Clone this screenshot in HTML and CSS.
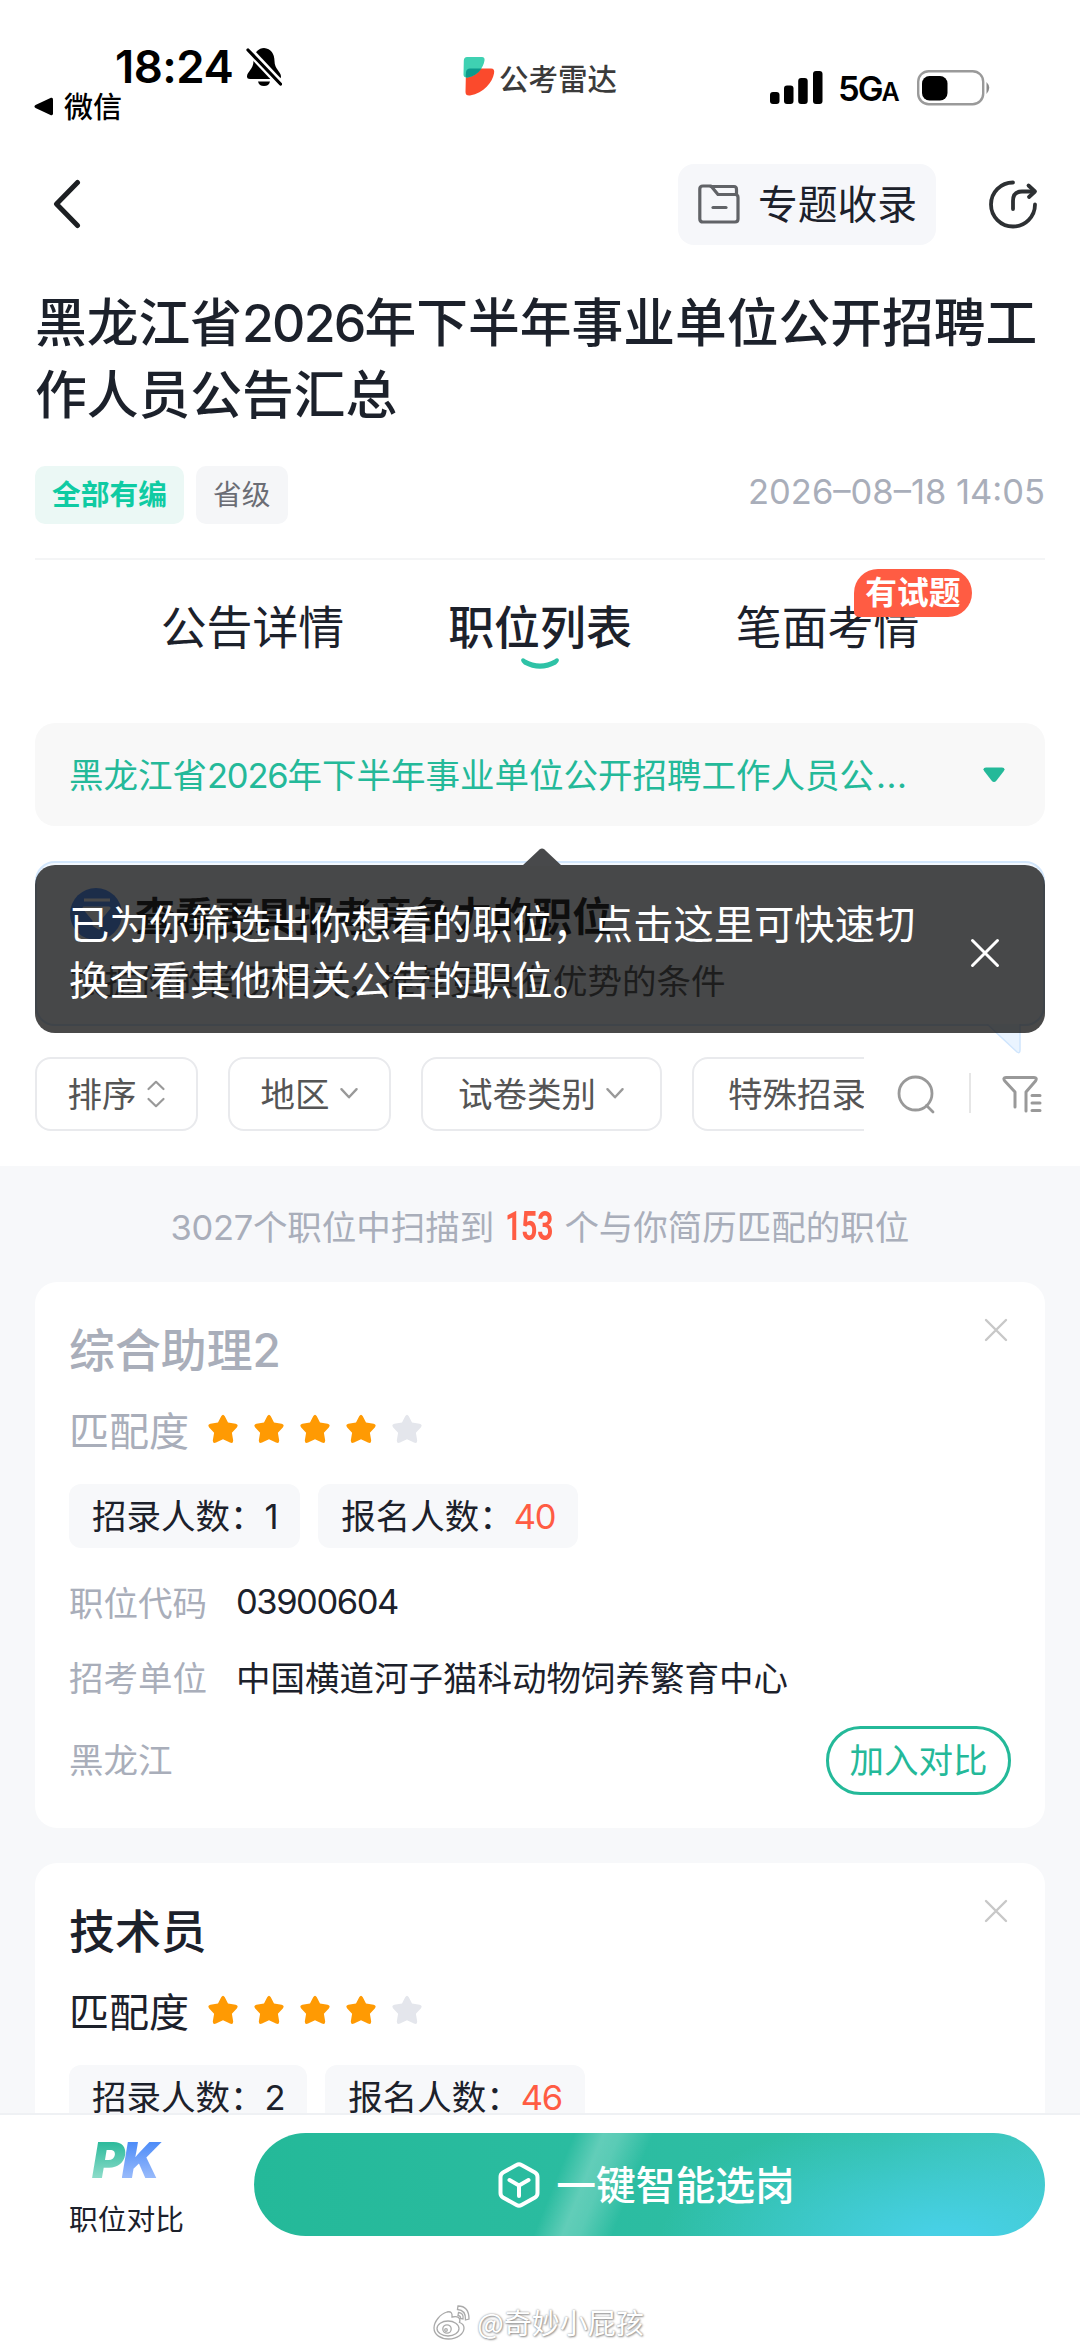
FILE: index.html
```html
<!DOCTYPE html>
<html lang="zh-CN">
<head>
<meta charset="utf-8">
<title>职位列表</title>
<link rel="stylesheet" href="styles.css">
</head>
<body>
<svg width="0" height="0" class="defs" aria-hidden="true">
  <symbol id="star" viewBox="0 0 32 30"><path d="M14.2 2.2Q16-.8 17.8 2.2L21 8.6 28.6 9.8Q32 10.6 29.8 13.4L24.9 18.8 26.2 26.4Q26.2 29.8 23 28.6L16 25.2 9 28.6Q5.8 29.8 5.8 26.4L7.1 18.8 2.2 13.4Q0 10.6 3.4 9.8L11 8.6Z" fill="currentColor"/></symbol>
  <symbol id="close" viewBox="0 0 24 24"><path d="M2 2L22 22M22 2L2 22" fill="none" stroke="currentColor" stroke-width="2.400" stroke-linecap="round"/></symbol>
  <symbol id="down" viewBox="0 0 18 12"><path d="M2 2L9 9.500 16 2" fill="none" stroke="currentColor" stroke-width="2.200" stroke-linecap="round" stroke-linejoin="round"/></symbol>
</svg>
<div class="screen">
  <div class="status">
    <div class="status-left">
      <div class="clock"><span class="time">18:24</span>
        <svg width="36" height="40" viewBox="0 0 36 40"><path d="M18 1C11 1.500 7.500 7 7.500 14 7.500 22 1 25 1 29.500Q1 32 4 32H32Q35 32 35 29.500C35 25 28.500 22 28.500 14 28.500 7 25 1.500 18 1ZM12 34.500H24Q23 39 18 39 13 39 12 34.500Z"/><path d="M1 1.500L35 37.500" stroke="#fff" stroke-width="8"/><path d="M2 3L34.500 37" stroke="#000" stroke-width="3.200" stroke-linecap="round"/></svg>
      </div>
      <div class="back-app"><svg width="20" height="19" viewBox="0 0 20 19"><path d="M1.500 8L17 .8Q19 .3 19 2.500V16.500Q19 18.700 17 18.200L1.500 11Q-.6 9.500 1.500 8Z"/></svg><span>微信</span></div>
    </div>
    <div class="brand">
      <svg width="32" height="39" viewBox="0 0 32 39"><path d="M3 11.500H28Q32 11.500 31 16.500C29.500 25 21 36 7 38.500Q2.500 39 2.500 35Z" fill="#fb4a2c"/><path d="M4 0H19Q22 0 21.500 3.500C20.500 11 14 19 4.500 20.500Q.5 21 .5 17.500L.8 3.500Q1 0 4 0Z" fill="#3fd1b2"/><path d="M3 15Q3.500 11.500 7 11.500H18.500C15 16.500 10.500 19.500 4.500 20.500 3 20.700 2.700 20 2.700 19Z" fill="#0d9a8c"/></svg>
      <span>公考雷达</span>
    </div>
    <div class="status-right">
      <svg width="53" height="34" viewBox="0 0 53 34"><rect x="0" y="21" width="9.500" height="12" rx="3"/><rect x="14" y="14.500" width="9.500" height="18.500" rx="3"/><rect x="28.200" y="7" width="9.500" height="26" rx="3"/><rect x="43" y="0" width="9.500" height="33" rx="3"/></svg>
      <span class="net">5G<small>A</small></span>
      <svg width="74" height="36" viewBox="0 0 74 36"><rect x="1.200" y="1.200" width="65" height="33" rx="10.500" fill="none" stroke="#9a9a9a" stroke-width="2.400"/><path d="M69.500 12Q75 17.500 69.500 24Z" fill="#8a8a8a"/><rect x="5" y="6" width="25.500" height="24.500" rx="7.500"/></svg>
    </div>
  </div>

  <div class="nav">
    <svg class="back" width="28" height="50" viewBox="0 0 28 50"><path d="M24.500 3.500L3.500 25 24.500 46.500" fill="none" stroke="#1c1f22" stroke-width="5" stroke-linecap="round" stroke-linejoin="round"/></svg>
    <div class="collect">
      <svg width="42" height="40" viewBox="0 0 42 40" fill="none" stroke="#616367" stroke-width="3.200" stroke-linejoin="round" stroke-linecap="round"><path d="M1.800 5Q1.800 2 5 2H13L20 10.500H37Q40 10.500 40 13.500V35Q40 38 37 38H5Q1.800 38 1.800 35Z"/><path d="M13 2.500H36Q38.500 2.500 38.500 5.500V10"/><path d="M15 23.500H28"/></svg>
      <span>专题收录</span>
    </div>
    <svg class="share" width="50" height="50" viewBox="0 0 50 50" fill="none" stroke="#2d3033" stroke-width="3.800" stroke-linecap="round" stroke-linejoin="round"><path d="M25 3.500A22 22 0 1 0 47 25.500"/><path d="M25 30V22Q25 12.500 34 12.500H45"/><path d="M40.500 6.500L47 12.500 41 18"/></svg>
  </div>

  <h1>黑龙江省<span class="n">2026</span>年下半年事业单位公开招聘工作人员公告汇总</h1>

  <div class="meta">
    <span class="tag green">全部有编</span><span class="tag">省级</span>
    <span class="date n">2026–08–18 14:05</span>
  </div>

  <div class="tabs">
    <div class="tab">公告详情</div>
    <div class="tab active">职位列表<svg class="smile" width="38" height="12" viewBox="0 0 38 12"><path d="M0 2Q1-1 4.500 1.500Q19 9.500 33.500 1.500Q37-1 38 2Q38 4 35 6.500Q19 15 3 6.500Q0 4 0 2Z" fill="#2ec2a6"/></svg></div>
    <div class="tab">笔面考情<span class="badge">有试题</span></div>
  </div>

  <div class="select">
    <span>黑龙江省<span class="n">2026</span>年下半年事业单位公开招聘工作人员公<span class="dots">...</span></span>
    <svg width="22" height="16" viewBox="0 0 22 16"><path d="M3 .5H19Q23 1 20.500 4.500L13.500 13.500Q11 16.500 8.500 13.500L1.500 4.500Q-1 1 3 .5Z" fill="#24b999"/></svg>
  </div>

  <div class="promo-wrap">
    <div class="promo">
      <div class="promo-title"><svg width="52" height="52" viewBox="0 0 52 52"><circle cx="26" cy="26" r="26" fill="#3f86ff"/><path d="M14 12H40M14 20H39L29 32V40L24 37V32Z" fill="#fff" stroke="#fff" stroke-width="3" stroke-linejoin="round"/></svg><b>查看更具报考竞争力的职位</b></div>
      <p>根据你的简历情况，推荐更具有优势的条件</p>
    </div>
    <svg class="tail" width="36" height="32" viewBox="0 0 36 32"><path d="M1 0L31 28Q34 30 34 26V0" fill="#eaf4ff" stroke="#cfe5fd" stroke-width="1.500"/></svg>
    <div class="tip">
      <svg class="tip-arrow" width="40" height="18" viewBox="0 0 40 18"><path d="M0 18L17.500 1.500Q20-.5 22.500 1.500L40 18Z" fill="#48494b"/></svg>
      <p>已为你筛选出你想看的职位，点击这里可快速切<br>换查看其他相关公告的职位。</p>
      <svg class="tip-close" width="30" height="30"><use href="#close"/></svg>
    </div>
  </div>

  <div class="filters">
    <div class="pills">
      <div class="pill w1">排序<svg width="20" height="28" viewBox="0 0 20 28" fill="none" stroke="#999" stroke-width="2.200" stroke-linecap="round" stroke-linejoin="round"><path d="M2.500 9L10 1.800 17.500 9M2.500 19L10 26.200 17.500 19"/></svg></div>
      <div class="pill w1">地区<svg width="20" height="13"><use href="#down"/></svg></div>
      <div class="pill w2">试卷类别<svg width="20" height="13"><use href="#down"/></svg></div>
      <div class="pill w3">特殊招录</div>
    </div>
    <svg class="search" width="40" height="40" viewBox="0 0 40 40" fill="none" stroke="#999" stroke-width="2.800" stroke-linecap="round"><circle cx="18.500" cy="18.500" r="16.500"/><path d="M29.500 30.500L36 37"/></svg>
    <i class="sep"></i>
    <svg class="funnel" width="40" height="38" viewBox="0 0 40 38" fill="none" stroke="#999" stroke-width="3" stroke-linecap="round" stroke-linejoin="round"><path d="M13 32V17L2.800 6Q.5 2.500 4 2.500H32Q35.500 2.500 33.500 6L24 17V36"/><path d="M30 20.500H38M30 28H38M30 35.500H38"/></svg>
  </div>

  <div class="list">
    <div class="count"><span class="n">3027</span>个职位中扫描到<b>153</b>个与你简历匹配的职位</div>
    <div class="card seen">
      <svg class="x" width="24" height="24"><use href="#close"/></svg>
      <h2>综合助理<span class="n">2</span></h2>
      <div class="match">匹配度<span class="stars"><svg><use href="#star"/></svg><svg><use href="#star"/></svg><svg><use href="#star"/></svg><svg><use href="#star"/></svg><svg class="off"><use href="#star"/></svg></span></div>
      <div class="chips"><span class="chip">招录人数：<span class="n">1</span></span><span class="chip">报名人数：<span class="n red">40</span></span></div>
      <div class="row r1"><label>职位代码</label><span class="n">03900604</span></div>
      <div class="row r2"><label>招考单位</label><span>中国横道河子猫科动物饲养繁育中心</span></div>
      <div class="foot"><span>黑龙江</span><span class="cmp">加入对比</span></div>
    </div>
    <div class="card">
      <svg class="x" width="24" height="24"><use href="#close"/></svg>
      <h2>技术员</h2>
      <div class="match">匹配度<span class="stars"><svg><use href="#star"/></svg><svg><use href="#star"/></svg><svg><use href="#star"/></svg><svg><use href="#star"/></svg><svg class="off"><use href="#star"/></svg></span></div>
      <div class="chips"><span class="chip">招录人数：<span class="n">2</span></span><span class="chip">报名人数：<span class="n red">46</span></span></div>
    </div>
  </div>

  <div class="bottom">
    <div class="actions">
      <div class="pk"><div class="pk-logo"><span class="p">P</span><span class="k">K</span></div><div class="pk-label">职位对比</div></div>
      <div class="smart">
        <svg width="42" height="46" viewBox="0 0 42 46" fill="none" stroke="#fff" stroke-width="4" stroke-linecap="round" stroke-linejoin="round"><path d="M18.500 3Q21 1.500 23.500 3L37 10.500Q39.500 12 39.500 15V31Q39.500 34 37 35.500L23.500 43Q21 44.500 18.500 43L5 35.500Q2.500 34 2.500 31V15Q2.500 12 5 10.500Z"/><path d="M11.500 18L21 23.500 30.500 18M21 23.500V34"/></svg>
        <span>一键智能选岗</span>
      </div>
    </div>
    <div class="mark">
      <svg width="38" height="35" viewBox="0 0 38 35" fill="#fff" stroke="#aaa" stroke-width="1.300"><path d="M14 7C7 9 1 17 1 23 1 30 8 34 15.500 34 24 34 31 29 31 23 31 19.500 28 18 26.500 17.500 28 13 25 10.500 19 12 19.500 8 18 6 14 7Z"/><ellipse cx="15" cy="23.500" rx="11" ry="7.500"/><circle cx="14" cy="24" r="4.200"/><circle cx="13" cy="25" r="1.300"/><path d="M25 1Q36 1 36 14L32.500 15Q33 5 24.500 4.500ZM25.500 7.500Q31 8 30 14L27.500 13.500Q28 11 25 10.500Z"/></svg>
      <span>@奇妙小屁孩</span>
    </div>
  </div>
</div>
</body>
</html>
```
FILE: styles.css
```css
* { box-sizing: border-box; }
body { margin: 0; background: #fff; font-family: "Noto Sans CJK SC", sans-serif; color: #1c212b; }
h1, h2, p { margin: 0; }
svg { display: block; flex: none; }
.defs { position: absolute; }
.n { font-family: Inter, sans-serif; letter-spacing: -0.035em; line-height: 0; }
.screen { width: 1080px; height: 2348px; display: flex; flex-direction: column; overflow: hidden; }

.status { height: 164px; display: flex; color: #000; }
.status-left { width: 463px; padding: 44px 0 0 34px; }
.clock { display: flex; align-items: center; gap: 13px; padding-left: 81px; height: 46px; }
.time { font: 600 45.500px/46px Inter, sans-serif; width: 118px; white-space: nowrap; letter-spacing: -0.5px; }
.back-app { display: flex; align-items: center; gap: 10px; font-size: 29px; line-height: 30px; font-weight: 500; }
.back-app svg { margin-top: 2px; }
.brand { display: flex; gap: 4px; height: 39px; margin-top: 57px; width: 307px; align-items: center; font-size: 29.500px; line-height: 39px; font-weight: 500; color: #3b3b3b; }
.brand span { padding-top: 1px; }
.status-right { display: flex; align-items: flex-start; padding-top: 71px; }
.net { font: 600 34.500px/36px Inter, sans-serif; width: 78px; margin-left: 15px; margin-right: 1px; white-space: nowrap; letter-spacing: -2px; }
.net small { font-size: 25px; }
.status-right svg:last-child { margin-top: -1px; }

.nav { height: 81px; display: flex; align-items: center; padding: 0 42px 0 53px; }
.back, .share { margin-top: -1px; }
.collect { margin-left: auto; width: 258px; height: 81px; border-radius: 16px; background: #f6f7fa; display: flex; align-items: center; padding-left: 20px; gap: 18px; font-size: 39.750px; line-height: 60px; }
.collect svg { margin-top: -1px; }
.collect span { margin-top: -5px; }
.share { margin-left: 52px; }

h1 { margin: 39px 30px 0 35px; font-size: 51.750px; line-height: 72px; font-weight: 500; height: 144px; }
h1 .n { letter-spacing: -0.035em; }

.meta { margin: 38px 35px 0 35px; height: 58px; display: flex; align-items: center; gap: 12px; }
.tag { height: 58px; line-height: 54px; padding: 0 17px; border-radius: 10px; background: #f5f6f8; font-size: 28.750px; color: #6b6d75; }
.tag.green { background: #ebf8f5; color: #0fcba3; font-weight: 700; }
.date { margin: -6px 0 0 auto; font-size: 34.500px; color: #a9aeba; white-space: nowrap; letter-spacing: 0; }

.tabs { margin: 34px 35px 0; border-top: 2px solid #f4f5f6; height: 165px; display: flex; justify-content: center; gap: 104px; font-size: 45.900px; line-height: 66px; padding-top: 31px; }
.tab { position: relative; height: 66px; }
.tab.active { font-weight: 500; }
.smile { position: absolute; left: 73px; top: 67px; }
.badge { position: absolute; left: 118px; top: -22px; width: 118px; height: 48px; border-radius: 24px 24px 24px 5px; background: #ff5c43; color: #fff; font-size: 31.750px; line-height: 43px; font-weight: 700; text-align: center; }

.select { margin: 0 35px; height: 103px; border-radius: 20px; background: #f8f8f8; display: flex; align-items: center; justify-content: space-between; padding: 0 40px 0 34px; font-size: 34.500px; line-height: 50px; color: #24b999; white-space: nowrap; }
.select > span { margin-top: -4px; }
.dots { font-family: Inter, sans-serif; letter-spacing: .6px; margin-left: 2px; line-height: 0; }

.promo-wrap { position: relative; margin: 35px 35px 0 35px; height: 165px; }
.promo { height: 165px; border: 2px solid #d3e7fc; border-radius: 20px; background: #f4f9ff; padding: 22px 33px; }
.promo-title { display: flex; align-items: center; gap: 13px; height: 58px; font-size: 39.750px; line-height: 58px; color: #000; }
.promo p { font-size: 34.500px; line-height: 50px; margin-top: 11px; color: #444; white-space: nowrap; }
.tail { position: absolute; right: 23px; top: 163px; }
.tip { position: absolute; left: 0; top: 4px; width: 1010px; height: 168px; border-radius: 20px; background: rgba(18, 18, 18, .77); color: #fff; padding: 29px 34px; font-size: 40.300px; line-height: 56px; white-space: nowrap; }
.tip-arrow { position: absolute; left: 487px; top: -17px; }
.tip-close { position: absolute; left: 935px; top: 73px; }

.filters { margin: 31px 36px 0 35px; height: 109px; display: flex; align-items: flex-start; }
.pills { width: 829px; height: 74px; display: flex; gap: 30px; overflow: hidden; }
.pill { flex: none; height: 74px; border: 2px solid #e9eaed; border-radius: 16px; display: flex; align-items: center; justify-content: center; font-size: 34.500px; line-height: 68px; color: #555; gap: 9px; padding-bottom: 4px; }
.pill svg { color: #999; margin-top: 3px; }
.w1 { width: 163px; }
.w2 { width: 241px; }
.w3 { width: 242px; justify-content: flex-start; padding-left: 34px; }
.search { margin: 18px 0 0 33px; }
.sep { width: 2px; height: 40px; background: #e6e6e6; margin: 16px 0 0 32px; }
.funnel { margin: 18px 0 0 31px; }

.list { height: 947px; overflow: hidden; background: #f7f8fa; padding: 0 35px; }
.count { height: 116px; line-height: 118px; text-align: center; font-size: 34.500px; color: #a9aeba; white-space: nowrap; }
.count .n { letter-spacing: -0.01em; }
.count b { font: 700 40px/1 "Roboto", sans-serif; color: #ff5c43; margin: 0 13px; display: inline-block; transform: scaleX(.7); width: 44px; text-indent: -12px; }
.card { position: relative; height: 546px; background: #fff; border-radius: 22px; margin-bottom: 35px; padding: 32px 34px; }
.card h2 { font-size: 45.900px; line-height: 66px; font-weight: 500; }
.match { margin-top: 21px; height: 56px; line-height: 52px; font-size: 40px; display: flex; align-items: center; gap: 18px; }
.stars { display: flex; gap: 14px; color: #ff9a03; }
.stars svg { width: 32px; height: 30px; }
.stars .off { color: #e4e6ec; }
.chips { margin-top: 27px; display: flex; gap: 18px; }
.chip { height: 64px; line-height: 60px; border-radius: 12px; background: #f7f8fa; padding: 0 23px; font-size: 34.500px; white-space: pre; }
.chip .n { letter-spacing: -1.300px; }
.red { color: #ff5c43; }
.row { height: 50px; line-height: 50px; display: flex; gap: 29px; font-size: 34.500px; }
.row .n { line-height: 52px; letter-spacing: -1.450px; }
.r1 { margin-top: 28px; }
.r2 { margin-top: 25px; }
.row label, .foot { color: #a9aeba; }
.foot { margin-top: 25px; height: 69px; display: flex; align-items: center; justify-content: space-between; font-size: 34.500px; line-height: 65px; }
.foot > span:first-child { margin-top: -4px; }
.cmp { width: 185px; height: 69px; border: 3px solid #24b999; border-radius: 35px; color: #24b999; text-align: center; line-height: 59px; }
.seen h2, .seen .match { color: #a9aeba; }
.x { position: absolute; right: 37px; top: 36px; color: #c8c8c8; }

.bottom { height: 234px; background: #fff; border-top: 2px solid #eff1f4; }
.actions { display: flex; height: 122px; padding: 18px 35px 0 69px; }
.pk { width: 185px; }
.pk-logo { display: flex; height: 56px; padding-left: 23px; margin-top: -1px; font: italic 900 50px/56px Inter, sans-serif; }
.pk-logo span { -webkit-background-clip: text; background-clip: text; color: transparent; padding-right: 4px; margin-right: -7px; }
.p { background-image: linear-gradient(#2fbb9d 20%, #8adbc8 80%); }
.k { background-image: linear-gradient(#4f8df8 20%, #96b9fb 80%); }
.pk-label { font-size: 28.750px; line-height: 42px; margin-top: 9px; }
.smart { width: 791px; height: 103px; border-radius: 52px; display: flex; align-items: center; justify-content: center; gap: 16px; padding-right: 6px; color: #fff; font-size: 39.750px; font-weight: 500; line-height: 60px;
  background:
    linear-gradient(112deg, transparent 38.500%, rgba(255,255,255,.26) 42%, rgba(255,255,255,.22) 44%, transparent 48%),
    radial-gradient(ellipse 290px 130px at 88% 105%, #47d0e5 10%, rgba(71,208,229,0) 100%),
    linear-gradient(90deg, #24b999, #31bfa7 80%, #3fc6bb); }
.smart span { margin-top: -3px; }
.mark { display: flex; justify-content: center; align-items: center; gap: 6px; height: 40px; margin: 65px 3px 0 0; color: #fff; font-size: 28px; text-shadow: 0 0 2px #888, 1px 1px 2px #999; line-height: 40px; }
```
